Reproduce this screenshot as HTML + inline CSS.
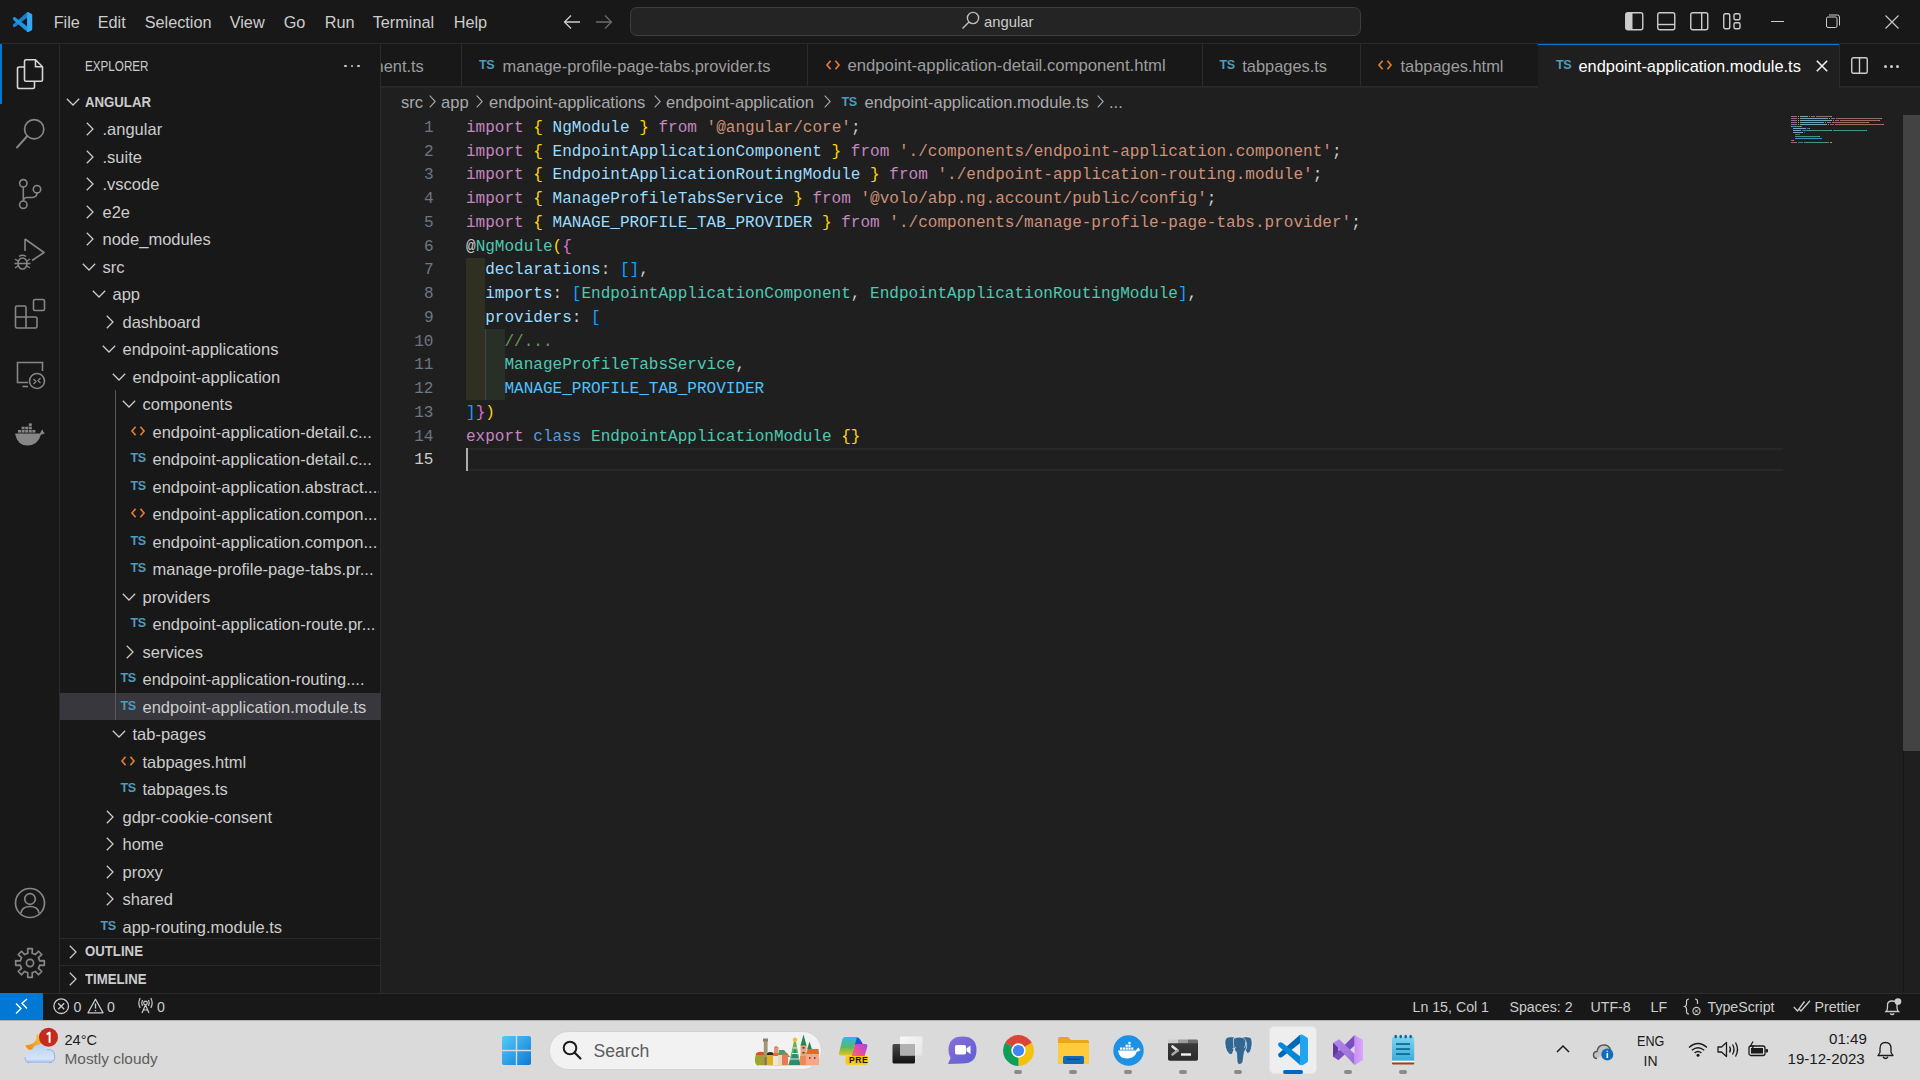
<!DOCTYPE html>
<html><head><meta charset="utf-8"><title>VS Code</title><style>
*{margin:0;padding:0;box-sizing:border-box}
html,body{width:1920px;height:1080px;overflow:hidden;background:#1F1F1F;font-family:"Liberation Sans", sans-serif}
.a{position:absolute}
.t{position:absolute;white-space:pre;line-height:20px;font-family:"Liberation Sans", sans-serif}
svg{position:absolute;overflow:visible}
.code{position:absolute;white-space:pre;font-family:"Liberation Mono", monospace;font-size:16.04px;line-height:23.75px;color:#CCCCCC}
</style></head>
<body>
<div class="a" style="left:0;top:0;width:1920px;height:43px;background:#181818"></div>
<div class="a" style="left:0;top:43px;width:1920px;height:1px;background:#2B2B2B"></div>
<svg style="left:11.7px;top:11.7px" width="20.5" height="20.2" viewBox="3.3 2.5 30.7 31">
<path d="M26 2.8 L26 11.3 L8.2 25 Q6 26.3 4.6 24.6 Q3.3 22.8 5 21.2 Z" fill="#1A80C8"/>
<path d="M26 33 L26 24.3 L8.2 10.8 Q6 9.5 4.6 11.2 Q3.3 13 5 14.6 Z" fill="#2094E2"/>
<path d="M26 2.8 Q27.5 2.3 29 3.1 L33 5.4 Q34 6.2 34 7.5 V28.5 Q34 29.8 33 30.6 L29 32.9 Q27.5 33.7 26 33 Z" fill="#33A8F4"/>
</svg>
<div class="t " style="left:53.7px;top:12.17px;font-size:16.25px;color:#CCCCCC;font-weight:400;">File</div>
<div class="t " style="left:97.7px;top:12.17px;font-size:16.25px;color:#CCCCCC;font-weight:400;">Edit</div>
<div class="t " style="left:144.7px;top:12.17px;font-size:16.25px;color:#CCCCCC;font-weight:400;">Selection</div>
<div class="t " style="left:229.7px;top:12.17px;font-size:16.25px;color:#CCCCCC;font-weight:400;">View</div>
<div class="t " style="left:283.7px;top:12.17px;font-size:16.25px;color:#CCCCCC;font-weight:400;">Go</div>
<div class="t " style="left:324.7px;top:12.17px;font-size:16.25px;color:#CCCCCC;font-weight:400;">Run</div>
<div class="t " style="left:372.7px;top:12.17px;font-size:16.25px;color:#CCCCCC;font-weight:400;">Terminal</div>
<div class="t " style="left:453.7px;top:12.17px;font-size:16.25px;color:#CCCCCC;font-weight:400;">Help</div>
<svg style="left:563px;top:14.2px" width="18" height="16" viewBox="0 0 18 16"><path d="M8 1.5 L1.5 8 L8 14.5 M1.5 8 H17" stroke="#CCCCCC" stroke-width="1.3" fill="none"/></svg>
<svg style="left:595px;top:14.2px" width="18" height="16" viewBox="0 0 18 16"><path d="M10 1.5 L16.5 8 L10 14.5 M16.5 8 H1" stroke="#6B6B6B" stroke-width="1.3" fill="none"/></svg>
<div class="a" style="left:630px;top:7px;width:731px;height:29px;background:#242424;border:1px solid #3E3E3E;border-radius:7px"></div>
<svg style="left:961px;top:11px" width="19" height="19" viewBox="0 0 19 19"><circle cx="12" cy="7" r="5.6" stroke="#BDBDBD" stroke-width="1.4" fill="none"/><path d="M8 11 L1.5 17.5" stroke="#BDBDBD" stroke-width="1.5"/></svg>
<div class="t " style="left:984px;top:11.77px;font-size:14.8px;color:#CCCCCC;font-weight:400;">angular</div>
<svg style="left:1625px;top:12px" width="19" height="19" viewBox="0 0 19 19"><rect x="0.75" y="0.75" width="17" height="17" rx="2" stroke="#CCCCCC" stroke-width="1.4" fill="none"/><rect x="1" y="1" width="6.5" height="16.5" fill="#CCCCCC"/></svg>
<svg style="left:1657px;top:12px" width="19" height="19" viewBox="0 0 19 19"><rect x="0.75" y="0.75" width="17" height="17" rx="2" stroke="#CCCCCC" stroke-width="1.4" fill="none"/><path d="M1 12.5 H18" stroke="#CCCCCC" stroke-width="1.4"/></svg>
<svg style="left:1690px;top:12px" width="19" height="19" viewBox="0 0 19 19"><rect x="0.75" y="0.75" width="17" height="17" rx="2" stroke="#CCCCCC" stroke-width="1.4" fill="none"/><path d="M11.7 1 V18" stroke="#CCCCCC" stroke-width="1.4"/></svg>
<svg style="left:1723px;top:13px" width="18" height="17" viewBox="0 0 18 17"><rect x="0.75" y="0.75" width="6" height="15" rx="1.5" stroke="#CCCCCC" stroke-width="1.4" fill="none"/><rect x="11" y="0.75" width="6" height="6" rx="1.5" stroke="#CCCCCC" stroke-width="1.4" fill="none"/><rect x="11" y="9.75" width="6" height="6" rx="1.5" stroke="#CCCCCC" stroke-width="1.4" fill="none"/></svg>
<div class="a" style="left:1771px;top:21px;width:13px;height:1px;background:#CCCCCC"></div>
<svg style="left:1826px;top:14px" width="15" height="15" viewBox="0 0 15 15"><rect x="0.5" y="3" width="10.5" height="10.5" rx="1.5" stroke="#CCCCCC" stroke-width="1" fill="none"/><path d="M3 1 H11.5 Q13.5 1 13.5 3 V11.5" stroke="#CCCCCC" stroke-width="1" fill="none"/></svg>
<svg style="left:1885px;top:15px" width="14" height="14" viewBox="0 0 14 14"><path d="M0.5 0.5 L13.5 13.5 M13.5 0.5 L0.5 13.5" stroke="#CCCCCC" stroke-width="1.1"/></svg>
<div class="a" style="left:0;top:44px;width:59px;height:949px;background:#181818"></div>
<div class="a" style="left:59px;top:44px;width:1px;height:949px;background:#2B2B2B"></div>
<div class="a" style="left:0;top:44px;width:2px;height:60px;background:#0078D4"></div>
<svg style="left:16px;top:58px" width="28" height="32" viewBox="0 0 28 32">
<path d="M8.5 9 H3.5 Q1.5 9 1.5 10.5 V29 Q1.5 30.5 3.5 30.5 H17 Q18.5 30.5 18.5 29 V23.5" stroke="#D7D7D7" stroke-width="1.6" fill="none"/>
<path d="M10 1.8 H19.5 L26.5 8.8 V22 Q26.5 23.3 25 23.3 H10 Q8.5 23.3 8.5 22 V3.3 Q8.5 1.8 10 1.8 Z M19.5 1.8 V8.8 H26.5" stroke="#D7D7D7" stroke-width="1.6" fill="none" stroke-linejoin="round"/>
</svg>
<svg style="left:15px;top:117px" width="32" height="33" viewBox="0 0 32 33">
<circle cx="19.2" cy="12.2" r="9.6" stroke="#868686" stroke-width="1.7" fill="none"/>
<path d="M12.3 19 L2 30.5" stroke="#868686" stroke-width="1.9" stroke-linecap="round"/>
</svg>
<svg style="left:17px;top:177px" width="26" height="34" viewBox="0 0 26 34">
<circle cx="6.3" cy="6.3" r="3.7" stroke="#868686" stroke-width="1.6" fill="none"/>
<circle cx="20" cy="12.2" r="3.7" stroke="#868686" stroke-width="1.6" fill="none"/>
<circle cx="6.3" cy="27.7" r="3.7" stroke="#868686" stroke-width="1.6" fill="none"/>
<path d="M6.3 10 V24 M20 15.9 Q20 20 15 20.5 H10 Q6.3 21 6.3 24" stroke="#868686" stroke-width="1.6" fill="none"/>
</svg>
<svg style="left:14px;top:237px" width="32" height="34" viewBox="0 0 32 34">
<path d="M11 2 V14 M11 2 L30 15.5 L18 23.5" stroke="#868686" stroke-width="1.6" fill="none" stroke-linejoin="round"/>
<ellipse cx="8.5" cy="26.5" rx="4.5" ry="5.5" stroke="#868686" stroke-width="1.6" fill="none"/>
<path d="M5 19.5 Q8.5 17 12 19.5 M1 22 L4 24 M16 22 L13 24 M1 31 L4 29 M16 31 L13 29 M0.5 26.5 H4 M13 26.5 H16.5 M4 26.5 H13" stroke="#868686" stroke-width="1.4" fill="none"/>
</svg>
<svg style="left:14px;top:298px" width="32" height="32" viewBox="0 0 32 32">
<path d="M3 8 H10.5 Q12 8 12 9.5 V19 H21.5 Q23 19 23 20.5 V28.5 Q23 30 21.5 30 H3 Q1.5 30 1.5 28.5 V9.5 Q1.5 8 3 8 Z M1.5 19 H12 V30" stroke="#868686" stroke-width="1.6" fill="none"/>
<rect x="19.5" y="1.5" width="11" height="11" rx="1.5" stroke="#868686" stroke-width="1.6" fill="none"/>
</svg>
<svg style="left:15px;top:360px" width="32" height="30" viewBox="0 0 32 30">
<path d="M13 22.5 H2.5 V2.5 H27.5 V11" stroke="#868686" stroke-width="1.6" fill="none"/>
<path d="M7.5 26.5 H13" stroke="#868686" stroke-width="1.6"/>
<circle cx="22" cy="21" r="7.5" stroke="#868686" stroke-width="1.6" fill="none"/>
<path d="M18.5 19 L21 21.5 L18.5 24 M25.5 18 L23 20.5 L25.5 23" stroke="#868686" stroke-width="1.3" fill="none"/>
</svg>
<svg style="left:14px;top:421px" width="32" height="26" viewBox="0 0 32 26">
<path d="M1 12.5 H26 Q27 9 29 8.5 Q28.5 11 31 12 Q29 13.5 27 13.5 Q24 24 14 24.5 Q3.5 25 1 12.5 Z" fill="#868686"/>
<g fill="#868686"><rect x="4" y="9" width="3" height="2.6"/><rect x="7.6" y="9" width="3" height="2.6"/><rect x="11.2" y="9" width="3" height="2.6"/><rect x="14.8" y="9" width="3" height="2.6"/><rect x="18.4" y="9" width="3" height="2.6"/>
<rect x="7.6" y="5.7" width="3" height="2.6"/><rect x="11.2" y="5.7" width="3" height="2.6"/><rect x="14.8" y="5.7" width="3" height="2.6"/><rect x="14.8" y="2.4" width="3" height="2.6"/></g>
</svg>
<svg style="left:14px;top:887px" width="32" height="32" viewBox="0 0 32 32">
<circle cx="16" cy="16" r="14.5" stroke="#868686" stroke-width="1.7" fill="none"/>
<circle cx="16" cy="12" r="5.3" stroke="#868686" stroke-width="1.7" fill="none"/>
<path d="M7 26 Q8 19.5 16 19.5 Q24 19.5 25 26" stroke="#868686" stroke-width="1.7" fill="none"/>
</svg>
<svg style="left:14px;top:947px" width="32" height="32" viewBox="0 0 32 32">
<polygon points="25.76,13.82 30.31,13.69 30.31,18.31 25.76,18.18 24.44,21.36 27.76,24.49 24.49,27.76 21.36,24.44 18.18,25.76 18.31,30.31 13.69,30.31 13.82,25.76 10.64,24.44 7.51,27.76 4.24,24.49 7.56,21.36 6.24,18.18 1.69,18.31 1.69,13.69 6.24,13.82 7.56,10.64 4.24,7.51 7.51,4.24 10.64,7.56 13.82,6.24 13.69,1.69 18.31,1.69 18.18,6.24 21.36,7.56 24.49,4.24 27.76,7.51 24.44,10.64" stroke="#868686" stroke-width="1.7" fill="none" stroke-linejoin="round"/>
<circle cx="16" cy="16" r="3.6" stroke="#868686" stroke-width="1.7" fill="none"/>
</svg>
<div class="a" style="left:60px;top:44px;width:320px;height:949px;background:#181818"></div>
<div class="a" style="left:380px;top:44px;width:1px;height:949px;background:#2B2B2B"></div>
<div class="t " style="left:85px;top:56.38px;font-size:13.9px;color:#CCCCCC;font-weight:400;transform:scaleX(0.84);transform-origin:0 0;">EXPLORER</div>
<div class="a" style="left:344px;top:64.5px;width:2.6px;height:2.6px;border-radius:50%;background:#CCCCCC"></div>
<div class="a" style="left:350.5px;top:64.5px;width:2.6px;height:2.6px;border-radius:50%;background:#CCCCCC"></div>
<div class="a" style="left:357px;top:64.5px;width:2.6px;height:2.6px;border-radius:50%;background:#CCCCCC"></div>
<svg style="left:65.5px;top:97.5px" width="14" height="8" viewBox="0 0 14 8"><path d="M0.8 0.8 L7 7 L13.2 0.8" stroke="#CCCCCC" stroke-width="1.25" fill="none"/></svg>
<div class="t " style="left:85px;top:92.54px;font-size:13.75px;color:#CCCCCC;font-weight:700;transform:scaleX(0.96);transform-origin:0 0;">ANGULAR</div>
<div class="a" style="left:60px;top:692.75px;width:321px;height:27.5px;background:#37373D"></div>
<div class="a" style="left:60px;top:115.25px;width:319px;height:823px;overflow:hidden"><div class="a" style="left:-60px;top:-115.25px;width:400px;height:1000px"><div class="a" style="left:115px;top:390.25px;width:1px;height:330.0px;background:#585858"></div>
<svg style="left:85.5px;top:122.0px" width="8" height="14" viewBox="0 0 8 14"><path d="M0.8 0.8 L7 7 L0.8 13.2" stroke="#CCCCCC" stroke-width="1.25" fill="none"/></svg>
<div class="t " style="left:102.5px;top:119.08px;font-size:16.5px;color:#CCCCCC;font-weight:400;">.angular</div>
<svg style="left:85.5px;top:149.5px" width="8" height="14" viewBox="0 0 8 14"><path d="M0.8 0.8 L7 7 L0.8 13.2" stroke="#CCCCCC" stroke-width="1.25" fill="none"/></svg>
<div class="t " style="left:102.5px;top:146.58px;font-size:16.5px;color:#CCCCCC;font-weight:400;">.suite</div>
<svg style="left:85.5px;top:177.0px" width="8" height="14" viewBox="0 0 8 14"><path d="M0.8 0.8 L7 7 L0.8 13.2" stroke="#CCCCCC" stroke-width="1.25" fill="none"/></svg>
<div class="t " style="left:102.5px;top:174.08px;font-size:16.5px;color:#CCCCCC;font-weight:400;">.vscode</div>
<svg style="left:85.5px;top:204.5px" width="8" height="14" viewBox="0 0 8 14"><path d="M0.8 0.8 L7 7 L0.8 13.2" stroke="#CCCCCC" stroke-width="1.25" fill="none"/></svg>
<div class="t " style="left:102.5px;top:201.58px;font-size:16.5px;color:#CCCCCC;font-weight:400;">e2e</div>
<svg style="left:85.5px;top:232.0px" width="8" height="14" viewBox="0 0 8 14"><path d="M0.8 0.8 L7 7 L0.8 13.2" stroke="#CCCCCC" stroke-width="1.25" fill="none"/></svg>
<div class="t " style="left:102.5px;top:229.08px;font-size:16.5px;color:#CCCCCC;font-weight:400;">node_modules</div>
<svg style="left:82.2px;top:262.5px" width="14" height="8" viewBox="0 0 14 8"><path d="M0.8 0.8 L7 7 L13.2 0.8" stroke="#CCCCCC" stroke-width="1.25" fill="none"/></svg>
<div class="t " style="left:102.5px;top:256.58px;font-size:16.5px;color:#CCCCCC;font-weight:400;">src</div>
<svg style="left:92.2px;top:290.0px" width="14" height="8" viewBox="0 0 14 8"><path d="M0.8 0.8 L7 7 L13.2 0.8" stroke="#CCCCCC" stroke-width="1.25" fill="none"/></svg>
<div class="t " style="left:112.5px;top:284.08px;font-size:16.5px;color:#CCCCCC;font-weight:400;">app</div>
<svg style="left:105.5px;top:314.5px" width="8" height="14" viewBox="0 0 8 14"><path d="M0.8 0.8 L7 7 L0.8 13.2" stroke="#CCCCCC" stroke-width="1.25" fill="none"/></svg>
<div class="t " style="left:122.5px;top:311.58px;font-size:16.5px;color:#CCCCCC;font-weight:400;">dashboard</div>
<svg style="left:102.2px;top:345.0px" width="14" height="8" viewBox="0 0 14 8"><path d="M0.8 0.8 L7 7 L13.2 0.8" stroke="#CCCCCC" stroke-width="1.25" fill="none"/></svg>
<div class="t " style="left:122.5px;top:339.08px;font-size:16.5px;color:#CCCCCC;font-weight:400;">endpoint-applications</div>
<svg style="left:112.2px;top:372.5px" width="14" height="8" viewBox="0 0 14 8"><path d="M0.8 0.8 L7 7 L13.2 0.8" stroke="#CCCCCC" stroke-width="1.25" fill="none"/></svg>
<div class="t " style="left:132.5px;top:366.58px;font-size:16.5px;color:#CCCCCC;font-weight:400;">endpoint-application</div>
<svg style="left:122.19999999999999px;top:400.0px" width="14" height="8" viewBox="0 0 14 8"><path d="M0.8 0.8 L7 7 L13.2 0.8" stroke="#CCCCCC" stroke-width="1.25" fill="none"/></svg>
<div class="t " style="left:142.5px;top:394.08px;font-size:16.5px;color:#CCCCCC;font-weight:400;">components</div>
<svg style="left:130.8px;top:425.8px" width="14" height="10" viewBox="0 0 14 10"><path d="M4.6 0.8 L1 5 L4.6 9.2 M9.4 0.8 L13 5 L9.4 9.2" stroke="#E37933" stroke-width="1.7" fill="none"/></svg>
<div class="t " style="left:152.5px;top:421.58px;font-size:16.5px;color:#CCCCCC;font-weight:400;">endpoint-application-detail.c...</div>
<div class="t " style="left:130.5px;top:448.23px;font-size:12.6px;color:#519ABA;font-weight:700;letter-spacing:-0.4px;">TS</div>
<div class="t " style="left:152.5px;top:449.08px;font-size:16.5px;color:#CCCCCC;font-weight:400;">endpoint-application-detail.c...</div>
<div class="t " style="left:130.5px;top:475.73px;font-size:12.6px;color:#519ABA;font-weight:700;letter-spacing:-0.4px;">TS</div>
<div class="t " style="left:152.5px;top:476.58px;font-size:16.5px;color:#CCCCCC;font-weight:400;">endpoint-application.abstract....</div>
<svg style="left:130.8px;top:508.3px" width="14" height="10" viewBox="0 0 14 10"><path d="M4.6 0.8 L1 5 L4.6 9.2 M9.4 0.8 L13 5 L9.4 9.2" stroke="#E37933" stroke-width="1.7" fill="none"/></svg>
<div class="t " style="left:152.5px;top:504.08px;font-size:16.5px;color:#CCCCCC;font-weight:400;">endpoint-application.compon...</div>
<div class="t " style="left:130.5px;top:530.73px;font-size:12.6px;color:#519ABA;font-weight:700;letter-spacing:-0.4px;">TS</div>
<div class="t " style="left:152.5px;top:531.58px;font-size:16.5px;color:#CCCCCC;font-weight:400;">endpoint-application.compon...</div>
<div class="t " style="left:130.5px;top:558.23px;font-size:12.6px;color:#519ABA;font-weight:700;letter-spacing:-0.4px;">TS</div>
<div class="t " style="left:152.5px;top:559.08px;font-size:16.5px;color:#CCCCCC;font-weight:400;">manage-profile-page-tabs.pr...</div>
<svg style="left:122.19999999999999px;top:592.5px" width="14" height="8" viewBox="0 0 14 8"><path d="M0.8 0.8 L7 7 L13.2 0.8" stroke="#CCCCCC" stroke-width="1.25" fill="none"/></svg>
<div class="t " style="left:142.5px;top:586.58px;font-size:16.5px;color:#CCCCCC;font-weight:400;">providers</div>
<div class="t " style="left:130.5px;top:613.23px;font-size:12.6px;color:#519ABA;font-weight:700;letter-spacing:-0.4px;">TS</div>
<div class="t " style="left:152.5px;top:614.08px;font-size:16.5px;color:#CCCCCC;font-weight:400;">endpoint-application-route.pr...</div>
<svg style="left:125.5px;top:644.5px" width="8" height="14" viewBox="0 0 8 14"><path d="M0.8 0.8 L7 7 L0.8 13.2" stroke="#CCCCCC" stroke-width="1.25" fill="none"/></svg>
<div class="t " style="left:142.5px;top:641.58px;font-size:16.5px;color:#CCCCCC;font-weight:400;">services</div>
<div class="t " style="left:120.5px;top:668.23px;font-size:12.6px;color:#519ABA;font-weight:700;letter-spacing:-0.4px;">TS</div>
<div class="t " style="left:142.5px;top:669.08px;font-size:16.5px;color:#CCCCCC;font-weight:400;">endpoint-application-routing....</div>
<div class="t " style="left:120.5px;top:695.73px;font-size:12.6px;color:#519ABA;font-weight:700;letter-spacing:-0.4px;">TS</div>
<div class="t " style="left:142.5px;top:696.58px;font-size:16.5px;color:#CCCCCC;font-weight:400;">endpoint-application.module.ts</div>
<svg style="left:112.2px;top:730.0px" width="14" height="8" viewBox="0 0 14 8"><path d="M0.8 0.8 L7 7 L13.2 0.8" stroke="#CCCCCC" stroke-width="1.25" fill="none"/></svg>
<div class="t " style="left:132.5px;top:724.08px;font-size:16.5px;color:#CCCCCC;font-weight:400;">tab-pages</div>
<svg style="left:120.8px;top:755.8px" width="14" height="10" viewBox="0 0 14 10"><path d="M4.6 0.8 L1 5 L4.6 9.2 M9.4 0.8 L13 5 L9.4 9.2" stroke="#E37933" stroke-width="1.7" fill="none"/></svg>
<div class="t " style="left:142.5px;top:751.58px;font-size:16.5px;color:#CCCCCC;font-weight:400;">tabpages.html</div>
<div class="t " style="left:120.5px;top:778.23px;font-size:12.6px;color:#519ABA;font-weight:700;letter-spacing:-0.4px;">TS</div>
<div class="t " style="left:142.5px;top:779.08px;font-size:16.5px;color:#CCCCCC;font-weight:400;">tabpages.ts</div>
<svg style="left:105.5px;top:809.5px" width="8" height="14" viewBox="0 0 8 14"><path d="M0.8 0.8 L7 7 L0.8 13.2" stroke="#CCCCCC" stroke-width="1.25" fill="none"/></svg>
<div class="t " style="left:122.5px;top:806.58px;font-size:16.5px;color:#CCCCCC;font-weight:400;">gdpr-cookie-consent</div>
<svg style="left:105.5px;top:837.0px" width="8" height="14" viewBox="0 0 8 14"><path d="M0.8 0.8 L7 7 L0.8 13.2" stroke="#CCCCCC" stroke-width="1.25" fill="none"/></svg>
<div class="t " style="left:122.5px;top:834.08px;font-size:16.5px;color:#CCCCCC;font-weight:400;">home</div>
<svg style="left:105.5px;top:864.5px" width="8" height="14" viewBox="0 0 8 14"><path d="M0.8 0.8 L7 7 L0.8 13.2" stroke="#CCCCCC" stroke-width="1.25" fill="none"/></svg>
<div class="t " style="left:122.5px;top:861.58px;font-size:16.5px;color:#CCCCCC;font-weight:400;">proxy</div>
<svg style="left:105.5px;top:892.0px" width="8" height="14" viewBox="0 0 8 14"><path d="M0.8 0.8 L7 7 L0.8 13.2" stroke="#CCCCCC" stroke-width="1.25" fill="none"/></svg>
<div class="t " style="left:122.5px;top:889.08px;font-size:16.5px;color:#CCCCCC;font-weight:400;">shared</div>
<div class="t " style="left:100.5px;top:915.73px;font-size:12.6px;color:#519ABA;font-weight:700;letter-spacing:-0.4px;">TS</div>
<div class="t " style="left:122.5px;top:916.58px;font-size:16.5px;color:#CCCCCC;font-weight:400;">app-routing.module.ts</div></div></div>
<div class="a" style="left:60px;top:938px;width:320px;height:1px;background:#2B2B2B"></div>
<svg style="left:69px;top:944.5px" width="8" height="14" viewBox="0 0 8 14"><path d="M0.8 0.8 L7 7 L0.8 13.2" stroke="#CCCCCC" stroke-width="1.25" fill="none"/></svg>
<div class="t " style="left:85px;top:942.14px;font-size:13.75px;color:#CCCCCC;font-weight:700;transform:scaleX(0.96);transform-origin:0 0;">OUTLINE</div>
<div class="a" style="left:60px;top:965px;width:320px;height:1px;background:#2B2B2B"></div>
<svg style="left:69px;top:972px" width="8" height="14" viewBox="0 0 8 14"><path d="M0.8 0.8 L7 7 L0.8 13.2" stroke="#CCCCCC" stroke-width="1.25" fill="none"/></svg>
<div class="t " style="left:85px;top:969.84px;font-size:13.75px;color:#CCCCCC;font-weight:700;transform:scaleX(0.96);transform-origin:0 0;">TIMELINE</div>
<div class="a" style="left:381px;top:44px;width:1539px;height:43px;background:#181818"></div>
<div class="a" style="left:381px;top:86px;width:1539px;height:1px;background:#2B2B2B"></div>
<div class="a" style="left:381px;top:87px;width:1539px;height:1px;background:#262626"></div>
<div class="a" style="left:461px;top:44px;width:1px;height:43px;background:#2B2B2B"></div>
<div class="a" style="left:807px;top:44px;width:1px;height:43px;background:#2B2B2B"></div>
<div class="t " style="left:479px;top:55.43px;font-size:12.6px;color:#519ABA;font-weight:700;letter-spacing:-0.4px;">TS</div>
<div class="a" style="left:1202px;top:44px;width:1px;height:43px;background:#2B2B2B"></div>
<svg style="left:825.8px;top:60.3px" width="14" height="10" viewBox="0 0 14 10"><path d="M4.6 0.8 L1 5 L4.6 9.2 M9.4 0.8 L13 5 L9.4 9.2" stroke="#E37933" stroke-width="1.7" fill="none"/></svg>
<div class="a" style="left:1360px;top:44px;width:1px;height:43px;background:#2B2B2B"></div>
<div class="t " style="left:1219.5px;top:55.43px;font-size:12.6px;color:#519ABA;font-weight:700;letter-spacing:-0.4px;">TS</div>
<div class="a" style="left:1538px;top:44px;width:1px;height:43px;background:#2B2B2B"></div>
<svg style="left:1378.3px;top:60.3px" width="14" height="10" viewBox="0 0 14 10"><path d="M4.6 0.8 L1 5 L4.6 9.2 M9.4 0.8 L13 5 L9.4 9.2" stroke="#E37933" stroke-width="1.7" fill="none"/></svg>
<div class="a" style="left:381px;top:44px;width:80px;height:43px;overflow:hidden"><div class="t " style="left:-15.5px;top:12.02px;font-size:16.4px;color:#9D9D9D;font-weight:400;">onent.ts</div></div>
<div class="t " style="left:502.5px;top:56.02px;font-size:16.4px;color:#9D9D9D;font-weight:400;">manage-profile-page-tabs.provider.ts</div>
<div class="t " style="left:847.5px;top:55.91px;font-size:16.7px;color:#9D9D9D;font-weight:400;">endpoint-application-detail.component.html</div>
<div class="t " style="left:1242.3px;top:56.02px;font-size:16.4px;color:#9D9D9D;font-weight:400;">tabpages.ts</div>
<div class="t " style="left:1400.5px;top:56.02px;font-size:16.4px;color:#9D9D9D;font-weight:400;">tabpages.html</div>
<div class="a" style="left:1538px;top:44px;width:301px;height:44px;background:#1F1F1F"></div>
<div class="a" style="left:1538px;top:44px;width:301px;height:1px;background:#0078D4"></div>
<div class="a" style="left:1839px;top:44px;width:1px;height:43px;background:#2B2B2B"></div>
<div class="t " style="left:1556px;top:55.43px;font-size:12.6px;color:#519ABA;font-weight:700;letter-spacing:-0.4px;">TS</div>
<div class="t " style="left:1578.5px;top:56.02px;font-size:16.4px;color:#FFFFFF;font-weight:400;">endpoint-application.module.ts</div>
<svg style="left:1815.5px;top:59.8px" width="12" height="12" viewBox="0 0 12 12"><path d="M0.8 0.8 L11.2 11.2 M11.2 0.8 L0.8 11.2" stroke="#F0F0F0" stroke-width="1.6"/></svg>
<svg style="left:1851px;top:57px" width="17" height="17" viewBox="0 0 17 17"><rect x="0.75" y="0.75" width="15.5" height="15.5" rx="1.5" stroke="#CCCCCC" stroke-width="1.4" fill="none"/><path d="M8.5 1 V16" stroke="#CCCCCC" stroke-width="1.4"/></svg>
<div class="a" style="left:1883.5px;top:64.5px;width:3px;height:3px;border-radius:50%;background:#CCCCCC"></div>
<div class="a" style="left:1889.9px;top:64.5px;width:3px;height:3px;border-radius:50%;background:#CCCCCC"></div>
<div class="a" style="left:1896.3px;top:64.5px;width:3px;height:3px;border-radius:50%;background:#CCCCCC"></div>
<div class="t " style="left:401px;top:92.57px;font-size:16.55px;color:#A9A9A9;font-weight:400;">src</div>
<svg style="left:428.5px;top:95px" width="7" height="13" viewBox="0 0 7 13"><path d="M0.7 0.7 L6.2 6.5 L0.7 12.3" stroke="#A9A9A9" stroke-width="1.1" fill="none"/></svg>
<div class="t " style="left:441px;top:92.57px;font-size:16.55px;color:#A9A9A9;font-weight:400;">app</div>
<svg style="left:476px;top:95px" width="7" height="13" viewBox="0 0 7 13"><path d="M0.7 0.7 L6.2 6.5 L0.7 12.3" stroke="#A9A9A9" stroke-width="1.1" fill="none"/></svg>
<div class="t " style="left:489px;top:92.57px;font-size:16.55px;color:#A9A9A9;font-weight:400;">endpoint-applications</div>
<svg style="left:653.5px;top:95px" width="7" height="13" viewBox="0 0 7 13"><path d="M0.7 0.7 L6.2 6.5 L0.7 12.3" stroke="#A9A9A9" stroke-width="1.1" fill="none"/></svg>
<div class="t " style="left:666px;top:92.57px;font-size:16.55px;color:#A9A9A9;font-weight:400;">endpoint-application</div>
<svg style="left:823.5px;top:95px" width="7" height="13" viewBox="0 0 7 13"><path d="M0.7 0.7 L6.2 6.5 L0.7 12.3" stroke="#A9A9A9" stroke-width="1.1" fill="none"/></svg>
<div class="t " style="left:841.5px;top:91.63px;font-size:12.6px;color:#519ABA;font-weight:700;letter-spacing:-0.4px;">TS</div>
<div class="t " style="left:864.5px;top:92.57px;font-size:16.55px;color:#A9A9A9;font-weight:400;">endpoint-application.module.ts</div>
<svg style="left:1096.5px;top:95px" width="7" height="13" viewBox="0 0 7 13"><path d="M0.7 0.7 L6.2 6.5 L0.7 12.3" stroke="#A9A9A9" stroke-width="1.1" fill="none"/></svg>
<div class="t " style="left:1109px;top:92.57px;font-size:16.55px;color:#A9A9A9;font-weight:400;">...</div>
<div class="a" style="left:466px;top:257.75px;width:19.25px;height:23.75px;background:#2F2F22"></div>
<div class="a" style="left:466px;top:281.50px;width:19.25px;height:23.75px;background:#2F2F22"></div>
<div class="a" style="left:466px;top:305.25px;width:19.25px;height:23.75px;background:#2F2F22"></div>
<div class="a" style="left:466px;top:329.00px;width:19.25px;height:23.75px;background:#2F2F22"></div>
<div class="a" style="left:466px;top:352.75px;width:19.25px;height:23.75px;background:#2F2F22"></div>
<div class="a" style="left:466px;top:376.50px;width:19.25px;height:23.75px;background:#2F2F22"></div>
<div class="a" style="left:485.25px;top:329.00px;width:19.25px;height:23.75px;background:#272F27"></div>
<div class="a" style="left:485.25px;top:352.75px;width:19.25px;height:23.75px;background:#272F27"></div>
<div class="a" style="left:485.25px;top:376.50px;width:19.25px;height:23.75px;background:#272F27"></div>
<div class="a" style="left:485px;top:329.00px;width:1px;height:71.25px;background:#454545"></div>
<div class="a" style="left:466px;top:448px;width:1317px;height:23px;border-top:2px solid #282828;border-bottom:2px solid #282828"></div>
<div class="a" style="left:466px;top:448.25px;width:2px;height:22.75px;background:#AEAFAD"></div>
<div class="code" style="left:384px;top:116.85px;width:49.5px;text-align:right;color:#6E7681">1</div>
<div class="code" style="left:384px;top:140.60px;width:49.5px;text-align:right;color:#6E7681">2</div>
<div class="code" style="left:384px;top:164.35px;width:49.5px;text-align:right;color:#6E7681">3</div>
<div class="code" style="left:384px;top:188.10px;width:49.5px;text-align:right;color:#6E7681">4</div>
<div class="code" style="left:384px;top:211.85px;width:49.5px;text-align:right;color:#6E7681">5</div>
<div class="code" style="left:384px;top:235.60px;width:49.5px;text-align:right;color:#6E7681">6</div>
<div class="code" style="left:384px;top:259.35px;width:49.5px;text-align:right;color:#6E7681">7</div>
<div class="code" style="left:384px;top:283.10px;width:49.5px;text-align:right;color:#6E7681">8</div>
<div class="code" style="left:384px;top:306.85px;width:49.5px;text-align:right;color:#6E7681">9</div>
<div class="code" style="left:384px;top:330.60px;width:49.5px;text-align:right;color:#6E7681">10</div>
<div class="code" style="left:384px;top:354.35px;width:49.5px;text-align:right;color:#6E7681">11</div>
<div class="code" style="left:384px;top:378.10px;width:49.5px;text-align:right;color:#6E7681">12</div>
<div class="code" style="left:384px;top:401.85px;width:49.5px;text-align:right;color:#6E7681">13</div>
<div class="code" style="left:384px;top:425.60px;width:49.5px;text-align:right;color:#6E7681">14</div>
<div class="code" style="left:384px;top:449.35px;width:49.5px;text-align:right;color:#CCCCCC">15</div>
<div class="code" style="left:466px;top:116.85px"><span style="color:#C586C0">import</span><span style="color:#CCCCCC"> </span><span style="color:#FFD700">{</span><span style="color:#CCCCCC"> </span><span style="color:#9CDCFE">NgModule</span><span style="color:#CCCCCC"> </span><span style="color:#FFD700">}</span><span style="color:#CCCCCC"> </span><span style="color:#C586C0">from</span><span style="color:#CCCCCC"> </span><span style="color:#CE9178">'@angular/core'</span><span style="color:#CCCCCC">;</span></div>
<div class="code" style="left:466px;top:140.60px"><span style="color:#C586C0">import</span><span style="color:#CCCCCC"> </span><span style="color:#FFD700">{</span><span style="color:#CCCCCC"> </span><span style="color:#9CDCFE">EndpointApplicationComponent</span><span style="color:#CCCCCC"> </span><span style="color:#FFD700">}</span><span style="color:#CCCCCC"> </span><span style="color:#C586C0">from</span><span style="color:#CCCCCC"> </span><span style="color:#CE9178">'./components/endpoint-application.component'</span><span style="color:#CCCCCC">;</span></div>
<div class="code" style="left:466px;top:164.35px"><span style="color:#C586C0">import</span><span style="color:#CCCCCC"> </span><span style="color:#FFD700">{</span><span style="color:#CCCCCC"> </span><span style="color:#9CDCFE">EndpointApplicationRoutingModule</span><span style="color:#CCCCCC"> </span><span style="color:#FFD700">}</span><span style="color:#CCCCCC"> </span><span style="color:#C586C0">from</span><span style="color:#CCCCCC"> </span><span style="color:#CE9178">'./endpoint-application-routing.module'</span><span style="color:#CCCCCC">;</span></div>
<div class="code" style="left:466px;top:188.10px"><span style="color:#C586C0">import</span><span style="color:#CCCCCC"> </span><span style="color:#FFD700">{</span><span style="color:#CCCCCC"> </span><span style="color:#9CDCFE">ManageProfileTabsService</span><span style="color:#CCCCCC"> </span><span style="color:#FFD700">}</span><span style="color:#CCCCCC"> </span><span style="color:#C586C0">from</span><span style="color:#CCCCCC"> </span><span style="color:#CE9178">'@volo/abp.ng.account/public/config'</span><span style="color:#CCCCCC">;</span></div>
<div class="code" style="left:466px;top:211.85px"><span style="color:#C586C0">import</span><span style="color:#CCCCCC"> </span><span style="color:#FFD700">{</span><span style="color:#CCCCCC"> </span><span style="color:#9CDCFE">MANAGE_PROFILE_TAB_PROVIDER</span><span style="color:#CCCCCC"> </span><span style="color:#FFD700">}</span><span style="color:#CCCCCC"> </span><span style="color:#C586C0">from</span><span style="color:#CCCCCC"> </span><span style="color:#CE9178">'./components/manage-profile-page-tabs.provider'</span><span style="color:#CCCCCC">;</span></div>
<div class="code" style="left:466px;top:235.60px"><span style="color:#CCCCCC">@</span><span style="color:#4EC9B0">NgModule</span><span style="color:#FFD700">(</span><span style="color:#DA70D6">{</span></div>
<div class="code" style="left:466px;top:259.35px"><span style="color:#CCCCCC">  </span><span style="color:#9CDCFE">declarations</span><span style="color:#CCCCCC">:</span><span style="color:#CCCCCC"> </span><span style="color:#179FFF">[</span><span style="color:#179FFF">]</span><span style="color:#CCCCCC">,</span></div>
<div class="code" style="left:466px;top:283.10px"><span style="color:#CCCCCC">  </span><span style="color:#9CDCFE">imports</span><span style="color:#CCCCCC">:</span><span style="color:#CCCCCC"> </span><span style="color:#179FFF">[</span><span style="color:#4EC9B0">EndpointApplicationComponent</span><span style="color:#CCCCCC">,</span><span style="color:#CCCCCC"> </span><span style="color:#4EC9B0">EndpointApplicationRoutingModule</span><span style="color:#179FFF">]</span><span style="color:#CCCCCC">,</span></div>
<div class="code" style="left:466px;top:306.85px"><span style="color:#CCCCCC">  </span><span style="color:#9CDCFE">providers</span><span style="color:#CCCCCC">:</span><span style="color:#CCCCCC"> </span><span style="color:#179FFF">[</span></div>
<div class="code" style="left:466px;top:330.60px"><span style="color:#CCCCCC">    </span><span style="color:#6A9955">//...</span></div>
<div class="code" style="left:466px;top:354.35px"><span style="color:#CCCCCC">    </span><span style="color:#4EC9B0">ManageProfileTabsService</span><span style="color:#CCCCCC">,</span></div>
<div class="code" style="left:466px;top:378.10px"><span style="color:#CCCCCC">    </span><span style="color:#4FC1FF">MANAGE_PROFILE_TAB_PROVIDER</span></div>
<div class="code" style="left:466px;top:401.85px"><span style="color:#179FFF">]</span><span style="color:#DA70D6">}</span><span style="color:#FFD700">)</span></div>
<div class="code" style="left:466px;top:425.60px"><span style="color:#C586C0">export</span><span style="color:#CCCCCC"> </span><span style="color:#569CD6">class</span><span style="color:#CCCCCC"> </span><span style="color:#4EC9B0">EndpointApplicationModule</span><span style="color:#CCCCCC"> </span><span style="color:#FFD700">{}</span></div>
<div class="code" style="left:466px;top:449.35px"></div>
<div class="a" style="left:1791px;top:115.5px;width:6px;height:1px;background:#C586C0;opacity:0.7"></div>
<div class="a" style="left:1798px;top:115.5px;width:1px;height:1px;background:#FFD700;opacity:0.7"></div>
<div class="a" style="left:1800px;top:115.5px;width:8px;height:1px;background:#9CDCFE;opacity:0.7"></div>
<div class="a" style="left:1809px;top:115.5px;width:1px;height:1px;background:#FFD700;opacity:0.7"></div>
<div class="a" style="left:1811px;top:115.5px;width:4px;height:1px;background:#C586C0;opacity:0.7"></div>
<div class="a" style="left:1816px;top:115.5px;width:15px;height:1px;background:#CE9178;opacity:0.7"></div>
<div class="a" style="left:1831px;top:115.5px;width:1px;height:1px;background:#CCCCCC;opacity:0.7"></div>
<div class="a" style="left:1791px;top:117.5px;width:6px;height:1px;background:#C586C0;opacity:0.7"></div>
<div class="a" style="left:1798px;top:117.5px;width:1px;height:1px;background:#FFD700;opacity:0.7"></div>
<div class="a" style="left:1800px;top:117.5px;width:28px;height:1px;background:#9CDCFE;opacity:0.7"></div>
<div class="a" style="left:1829px;top:117.5px;width:1px;height:1px;background:#FFD700;opacity:0.7"></div>
<div class="a" style="left:1831px;top:117.5px;width:4px;height:1px;background:#C586C0;opacity:0.7"></div>
<div class="a" style="left:1836px;top:117.5px;width:45px;height:1px;background:#CE9178;opacity:0.7"></div>
<div class="a" style="left:1881px;top:117.5px;width:1px;height:1px;background:#CCCCCC;opacity:0.7"></div>
<div class="a" style="left:1791px;top:119.5px;width:6px;height:1px;background:#C586C0;opacity:0.7"></div>
<div class="a" style="left:1798px;top:119.5px;width:1px;height:1px;background:#FFD700;opacity:0.7"></div>
<div class="a" style="left:1800px;top:119.5px;width:32px;height:1px;background:#9CDCFE;opacity:0.7"></div>
<div class="a" style="left:1833px;top:119.5px;width:1px;height:1px;background:#FFD700;opacity:0.7"></div>
<div class="a" style="left:1835px;top:119.5px;width:4px;height:1px;background:#C586C0;opacity:0.7"></div>
<div class="a" style="left:1840px;top:119.5px;width:39px;height:1px;background:#CE9178;opacity:0.7"></div>
<div class="a" style="left:1879px;top:119.5px;width:1px;height:1px;background:#CCCCCC;opacity:0.7"></div>
<div class="a" style="left:1791px;top:121.5px;width:6px;height:1px;background:#C586C0;opacity:0.7"></div>
<div class="a" style="left:1798px;top:121.5px;width:1px;height:1px;background:#FFD700;opacity:0.7"></div>
<div class="a" style="left:1800px;top:121.5px;width:24px;height:1px;background:#9CDCFE;opacity:0.7"></div>
<div class="a" style="left:1825px;top:121.5px;width:1px;height:1px;background:#FFD700;opacity:0.7"></div>
<div class="a" style="left:1827px;top:121.5px;width:4px;height:1px;background:#C586C0;opacity:0.7"></div>
<div class="a" style="left:1832px;top:121.5px;width:36px;height:1px;background:#CE9178;opacity:0.7"></div>
<div class="a" style="left:1868px;top:121.5px;width:1px;height:1px;background:#CCCCCC;opacity:0.7"></div>
<div class="a" style="left:1791px;top:123.5px;width:6px;height:1px;background:#C586C0;opacity:0.7"></div>
<div class="a" style="left:1798px;top:123.5px;width:1px;height:1px;background:#FFD700;opacity:0.7"></div>
<div class="a" style="left:1800px;top:123.5px;width:27px;height:1px;background:#9CDCFE;opacity:0.7"></div>
<div class="a" style="left:1828px;top:123.5px;width:1px;height:1px;background:#FFD700;opacity:0.7"></div>
<div class="a" style="left:1830px;top:123.5px;width:4px;height:1px;background:#C586C0;opacity:0.7"></div>
<div class="a" style="left:1835px;top:123.5px;width:48px;height:1px;background:#CE9178;opacity:0.7"></div>
<div class="a" style="left:1883px;top:123.5px;width:1px;height:1px;background:#CCCCCC;opacity:0.7"></div>
<div class="a" style="left:1791px;top:125.5px;width:1px;height:1px;background:#CCCCCC;opacity:0.7"></div>
<div class="a" style="left:1792px;top:125.5px;width:8px;height:1px;background:#4EC9B0;opacity:0.7"></div>
<div class="a" style="left:1800px;top:125.5px;width:1px;height:1px;background:#FFD700;opacity:0.7"></div>
<div class="a" style="left:1801px;top:125.5px;width:1px;height:1px;background:#DA70D6;opacity:0.7"></div>
<div class="a" style="left:1793px;top:127.5px;width:12px;height:1px;background:#9CDCFE;opacity:0.7"></div>
<div class="a" style="left:1805px;top:127.5px;width:1px;height:1px;background:#CCCCCC;opacity:0.7"></div>
<div class="a" style="left:1807px;top:127.5px;width:1px;height:1px;background:#179FFF;opacity:0.7"></div>
<div class="a" style="left:1808px;top:127.5px;width:1px;height:1px;background:#179FFF;opacity:0.7"></div>
<div class="a" style="left:1809px;top:127.5px;width:1px;height:1px;background:#CCCCCC;opacity:0.7"></div>
<div class="a" style="left:1793px;top:129.5px;width:7px;height:1px;background:#9CDCFE;opacity:0.7"></div>
<div class="a" style="left:1800px;top:129.5px;width:1px;height:1px;background:#CCCCCC;opacity:0.7"></div>
<div class="a" style="left:1802px;top:129.5px;width:1px;height:1px;background:#179FFF;opacity:0.7"></div>
<div class="a" style="left:1803px;top:129.5px;width:28px;height:1px;background:#4EC9B0;opacity:0.7"></div>
<div class="a" style="left:1831px;top:129.5px;width:1px;height:1px;background:#CCCCCC;opacity:0.7"></div>
<div class="a" style="left:1833px;top:129.5px;width:32px;height:1px;background:#4EC9B0;opacity:0.7"></div>
<div class="a" style="left:1865px;top:129.5px;width:1px;height:1px;background:#179FFF;opacity:0.7"></div>
<div class="a" style="left:1866px;top:129.5px;width:1px;height:1px;background:#CCCCCC;opacity:0.7"></div>
<div class="a" style="left:1793px;top:131.5px;width:9px;height:1px;background:#9CDCFE;opacity:0.7"></div>
<div class="a" style="left:1802px;top:131.5px;width:1px;height:1px;background:#CCCCCC;opacity:0.7"></div>
<div class="a" style="left:1804px;top:131.5px;width:1px;height:1px;background:#179FFF;opacity:0.7"></div>
<div class="a" style="left:1795px;top:133.5px;width:5px;height:1px;background:#6A9955;opacity:0.7"></div>
<div class="a" style="left:1795px;top:135.5px;width:24px;height:1px;background:#4EC9B0;opacity:0.7"></div>
<div class="a" style="left:1819px;top:135.5px;width:1px;height:1px;background:#CCCCCC;opacity:0.7"></div>
<div class="a" style="left:1795px;top:137.5px;width:27px;height:1px;background:#4FC1FF;opacity:0.7"></div>
<div class="a" style="left:1791px;top:139.5px;width:1px;height:1px;background:#179FFF;opacity:0.7"></div>
<div class="a" style="left:1792px;top:139.5px;width:1px;height:1px;background:#DA70D6;opacity:0.7"></div>
<div class="a" style="left:1793px;top:139.5px;width:1px;height:1px;background:#FFD700;opacity:0.7"></div>
<div class="a" style="left:1791px;top:141.5px;width:6px;height:1px;background:#C586C0;opacity:0.7"></div>
<div class="a" style="left:1798px;top:141.5px;width:5px;height:1px;background:#569CD6;opacity:0.7"></div>
<div class="a" style="left:1804px;top:141.5px;width:25px;height:1px;background:#4EC9B0;opacity:0.7"></div>
<div class="a" style="left:1830px;top:141.5px;width:2px;height:1px;background:#FFD700;opacity:0.7"></div>
<div class="a" style="left:1903px;top:115px;width:17px;height:636px;background:#434343"></div>
<div class="a" style="left:1903px;top:751px;width:1px;height:242px;background:#161616"></div>
<div class="a" style="left:0;top:993px;width:1920px;height:27px;background:#181818"></div>
<div class="a" style="left:0;top:993px;width:1920px;height:1px;background:#2B2B2B"></div>
<div class="a" style="left:0;top:993px;width:43px;height:27px;background:#0078D4"></div>
<svg style="left:15px;top:997.5px" width="14" height="17" viewBox="0 0 14 17"><path d="M1 15.5 L6 10.5 L1 5.5 M12 1 L7 5.3 L12 10.5" stroke="#FFFFFF" stroke-width="1.4" fill="none"/></svg>
<svg style="left:53px;top:998.2px" width="17" height="17" viewBox="0 0 17 17"><circle cx="8.2" cy="8.2" r="7.3" stroke="#CCCCCC" stroke-width="1.3" fill="none"/><path d="M5.2 5.2 L11.2 11.2 M11.2 5.2 L5.2 11.2" stroke="#CCCCCC" stroke-width="1.3"/></svg>
<div class="t " style="left:73.5px;top:996.68px;font-size:14.2px;color:#CCCCCC;font-weight:400;">0</div>
<svg style="left:87px;top:998.2px" width="17" height="16" viewBox="0 0 17 16"><path d="M8.5 1.2 L16 14.8 H1 Z" stroke="#CCCCCC" stroke-width="1.3" fill="none" stroke-linejoin="round"/><path d="M8.5 5.5 V10.5 M8.5 12 V13.3" stroke="#CCCCCC" stroke-width="1.3"/></svg>
<div class="t " style="left:107px;top:996.68px;font-size:14.2px;color:#CCCCCC;font-weight:400;">0</div>
<svg style="left:138px;top:997.3px" width="15" height="17" viewBox="0 0 15 17"><circle cx="7.5" cy="6" r="1.8" stroke="#CCCCCC" stroke-width="1.2" fill="none"/><path d="M4.5 3 Q3 6 4.5 9 M10.5 3 Q12 6 10.5 9 M2.2 1 Q-0.5 6 2.2 11 M12.8 1 Q15.5 6 12.8 11 M7.5 8 L4 16 M7.5 8 L11 16 M5.3 13 H9.7" stroke="#CCCCCC" stroke-width="1.2" fill="none"/></svg>
<div class="t " style="left:157px;top:996.68px;font-size:14.2px;color:#CCCCCC;font-weight:400;">0</div>
<div class="t " style="left:1412.5px;top:996.68px;font-size:14.2px;color:#CCCCCC;font-weight:400;">Ln 15, Col 1</div>
<div class="t " style="left:1509.5px;top:996.68px;font-size:14.2px;color:#CCCCCC;font-weight:400;">Spaces: 2</div>
<div class="t " style="left:1590.5px;top:996.68px;font-size:14.2px;color:#CCCCCC;font-weight:400;">UTF-8</div>
<div class="t " style="left:1650.5px;top:996.68px;font-size:14.2px;color:#CCCCCC;font-weight:400;">LF</div>
<svg style="left:1684px;top:998px" width="18" height="18" viewBox="0 0 18 18"><path d="M5 1 Q2.5 1 2.5 3.5 V6 Q2.5 8 0.8 8.5 Q2.5 9 2.5 11 V13.5 Q2.5 16 5 16 M11 1 Q13.5 1 13.5 3.5 V6" stroke="#CCCCCC" stroke-width="1.2" fill="none"/><circle cx="12.5" cy="13" r="3.6" stroke="#CCCCCC" stroke-width="1.1" fill="none"/><path d="M11 11.5 L14 14.5 M14 11.5 L11 14.5" stroke="#CCCCCC" stroke-width="1"/></svg>
<div class="t " style="left:1707.5px;top:996.68px;font-size:14.2px;color:#CCCCCC;font-weight:400;">TypeScript</div>
<svg style="left:1793px;top:1000px" width="18" height="13" viewBox="0 0 18 13"><path d="M0.8 7 L4.5 11 L11.5 1.5 M6.5 9.5 L8 11 L17 0.8" stroke="#CCCCCC" stroke-width="1.3" fill="none"/></svg>
<div class="t " style="left:1814.5px;top:996.68px;font-size:14.2px;color:#CCCCCC;font-weight:400;">Prettier</div>
<svg style="left:1884px;top:998px" width="18" height="18" viewBox="0 0 18 18"><path d="M2 13.5 H14.5 Q13 12 13 9.5 V7 Q13 3 8.2 3 Q3.5 3 3.5 7 V9.5 Q3.5 12 2 13.5 Z M6.2 15.5 Q8.2 17.5 10.2 15.5" stroke="#CCCCCC" stroke-width="1.3" fill="none"/><circle cx="14" cy="3.6" r="3.3" fill="#CCCCCC"/></svg>
<div class="a" style="left:0;top:1020px;width:1920px;height:60px;background:#DADADA"></div>
<div class="a" style="left:0;top:1020px;width:1920px;height:1px;background:#B0B0B0"></div>
<svg style="left:20px;top:1028px" width="44" height="40" viewBox="0 0 44 40">
<defs><linearGradient id="cl" x1="0" y1="0" x2="0" y2="1"><stop offset="0" stop-color="#B9D1F4"/><stop offset="0.8" stop-color="#D6E4F8"/><stop offset="1" stop-color="#98B8EC"/></linearGradient>
<linearGradient id="mn" x1="1" y1="0" x2="0" y2="1"><stop offset="0" stop-color="#F6C73A"/><stop offset="1" stop-color="#F08410"/></linearGradient></defs>
<path d="M16.3 6.3 C17.5 11 16 16.5 5.2 17.4 C6.5 19.5 8 21 9.6 21.9 C16 21.5 22 17.5 22 12 C22 9 19.5 7 16.3 6.3 Z" fill="url(#mn)"/>
<path d="M9.5 34.8 Q5 34.8 5.2 29 Q5.6 23 11.5 23.3 Q13.5 16.2 20 16.3 Q24.8 16.5 27 21.5 Q34.6 20.8 34.8 28 Q35 34.8 29 34.8 Z" fill="url(#cl)"/>
<path d="M9.5 34.8 Q5 34.8 5.2 29 M29 34.8 Q35 34.8 34.8 28 Q34.6 20.8 27 21.5" stroke="#86A9E6" stroke-width="1" fill="none" opacity="0.8"/>
<circle cx="28.5" cy="9.3" r="9.5" fill="#C42B1C"/>
<path d="M26.7 6.4 L29.6 4.6 V14.8" stroke="#FFFFFF" stroke-width="2" fill="none" stroke-linejoin="round"/>
</svg>
<div class="t " style="left:64.5px;top:1029.64px;font-size:14.6px;color:#1B1B1B;font-weight:400;">24°C</div>
<div class="t " style="left:64.5px;top:1049.16px;font-size:15.4px;color:#5E5E5E;font-weight:400;">Mostly cloudy</div>
<svg style="left:502px;top:1035.5px" width="29" height="29" viewBox="0 0 29 29">
<defs><linearGradient id="wl" x1="0" y1="0" x2="1" y2="1"><stop offset="0" stop-color="#52CCF8"/><stop offset="1" stop-color="#0F78D5"/></linearGradient></defs>
<path d="M0 2 Q0 0 2 0 H13.8 V13.8 H0 Z M15.2 0 H27 Q29 0 29 2 V13.8 H15.2 Z M0 15.2 H13.8 V29 H2 Q0 29 0 27 Z M15.2 15.2 H29 V27 Q29 29 27 29 H15.2 Z" fill="url(#wl)"/>
</svg>
<div class="a" style="left:549px;top:1031px;width:273px;height:38.5px;background:#F2F2F2;border:1px solid #D3D3D3;border-radius:19.25px"></div>
<svg style="left:562px;top:1040px" width="20" height="20" viewBox="0 0 20 20"><circle cx="8" cy="8" r="6.3" stroke="#1C1C1C" stroke-width="2" fill="none"/><path d="M12.5 12.5 L18.5 18.5" stroke="#1C1C1C" stroke-width="2.2" stroke-linecap="round"/></svg>
<div class="t " style="left:593.5px;top:1041.40px;font-size:17.6px;color:#5D5D5D;font-weight:400;">Search</div>
<svg style="left:750px;top:1032px" width="75" height="38" viewBox="0 0 75 38">
<defs><clipPath id="town"><path d="M8 34 Q3 31 6 22 L14 2 H70 Q73 18 69 34 Z"/></clipPath></defs>
<g clip-path="url(#town)">
<rect x="5" y="21" width="10" height="13" fill="#9DA52E"/>
<path d="M5 22 Q9 18.5 15 20.5 V23 H5 Z" fill="#D0562A"/>
<rect x="13.8" y="8" width="3.8" height="26" fill="#A39674"/>
<rect x="13" y="6.5" width="5" height="3" fill="#8E8163"/>
<rect x="14.5" y="25" width="2.2" height="9" fill="#837758"/>
<rect x="17" y="21" width="6.5" height="13" fill="#E2AE22"/>
<path d="M17 21.5 Q19.5 19 23.5 21 V23 H17 Z" fill="#2E2A26"/>
<rect x="24" y="15" width="4.5" height="8" fill="#E59572"/>
<path d="M24 16 L26 13.5 L28.5 16 Z" fill="#E08060"/>
<path d="M29 18 H34 L40 25 H29 Z" fill="#3D9E78"/>
<rect x="23" y="22" width="5" height="12" fill="#EFE6D8"/>
<rect x="23" y="21" width="6" height="3" fill="#D87040"/>
<rect x="28" y="23" width="4.5" height="11" fill="#E8D8BC"/>
<rect x="32" y="22.5" width="6" height="11.5" fill="#E87A55"/>
<path d="M31.5 22.5 L33.5 21 H37 L38.5 23 Z" fill="#D96A3C"/>
<path d="M45 5 L50.5 33 H38.5 Z" fill="#66B14E"/>
<path d="M45 16 L50.5 33 H38.5 Z" fill="#2F8A72"/>
<path d="M40 27 H49 M42 21.5 H48.5 M43 16 H47.5" stroke="#E8ECF2" stroke-width="1.2"/>
<circle cx="45" cy="7.8" r="2.3" fill="#E8C43A"/>
<rect x="50.5" y="13" width="6" height="21" fill="#F0A27F"/>
<path d="M50.5 13.5 L53.5 2.5 L56.5 13.5 Z" fill="#1F8A4C"/>
<rect x="52.5" y="15" width="2" height="1.6" fill="#5A3A2A"/><rect x="52.5" y="20" width="2" height="1.6" fill="#5A3A2A"/>
<path d="M57 17.5 L59.5 9.5 L62 17.5 Z" fill="#1F8A4C"/>
<rect x="57" y="17" width="5" height="6" fill="#F3B090"/>
<rect x="56" y="21" width="13" height="13" fill="#F4A888"/>
<path d="M56 22 L58 17 H68.5 L69 22 Z" fill="#E06A2A"/>
<rect x="59" y="25" width="1.5" height="2" fill="#7A4A3A"/><rect x="64" y="25" width="1.5" height="2" fill="#7A4A3A"/>
<rect x="50" y="24" width="6" height="10" fill="#EE8A55"/>
<rect x="8" y="33" width="62" height="1.5" fill="#DCD6C4"/>
</g>
</svg>
<svg style="left:838px;top:1036px" width="31" height="30" viewBox="0 0 31 30">
<defs><linearGradient id="cpl" x1="0" y1="0" x2="0" y2="1"><stop offset="0" stop-color="#2AB6F6"/><stop offset="0.55" stop-color="#5DB761"/><stop offset="1" stop-color="#EAC515"/></linearGradient>
<linearGradient id="cpr" x1="0" y1="1" x2="1" y2="0"><stop offset="0" stop-color="#F86A5A"/><stop offset="0.45" stop-color="#E94E9B"/><stop offset="1" stop-color="#9E45F2"/></linearGradient></defs>
<path d="M17 1 Q21 1 22.5 4 L25.5 9 H16 Z" fill="#1A55D6"/>
<path d="M7 1 H19 L14 19.5 H3 Q0.5 19.5 1 17 L4.3 3.5 Q5 1 7 1 Z" fill="url(#cpl)"/>
<path d="M18.5 8 H27.5 Q29.8 8 29.3 10.5 L26.3 21 H13.5 L16.5 10 Q17 8 18.5 8 Z" fill="url(#cpr)"/>
<rect x="7.5" y="20" width="22.7" height="8.8" rx="2.2" fill="#FFC905"/>
</svg>
<div class="t" style="left:849px;top:1054.4px;font-size:8.6px;line-height:12px;font-weight:700;color:#111111;letter-spacing:0.5px">PRE</div>
<svg style="left:892px;top:1036px" width="31" height="28" viewBox="0 0 31 28">
<defs><linearGradient id="tv" x1="0" y1="0" x2="0" y2="1"><stop offset="0" stop-color="#4A4A4A"/><stop offset="1" stop-color="#111111"/></linearGradient>
<linearGradient id="tv2" x1="0" y1="0" x2="1" y2="1"><stop offset="0" stop-color="#FAFAFA"/><stop offset="1" stop-color="#E6E6E6"/></linearGradient></defs>
<rect x="0.5" y="8" width="22.5" height="19.5" rx="1.5" fill="url(#tv)"/>
<rect x="8" y="0.5" width="22.5" height="19" rx="1" fill="url(#tv2)" opacity="0.92"/>
<rect x="8" y="8" width="15" height="11.5" fill="#A8A8A8" opacity="0.85"/>
</svg>
<svg style="left:947px;top:1036px" width="31" height="28" viewBox="0 0 31 28">
<defs><linearGradient id="mt" x1="0" y1="0" x2="1" y2="1"><stop offset="0" stop-color="#8C6ED8"/><stop offset="1" stop-color="#5B5FD4"/></linearGradient></defs>
<path d="M15.5 0.5 Q29.5 0.5 29.5 14 Q29.5 27.5 15.5 27.5 L1 28 L3.5 22 Q1.5 18.5 1.5 14 Q1.5 0.5 15.5 0.5 Z" fill="url(#mt)"/>
<rect x="8" y="9" width="11" height="9.5" rx="1.8" fill="#FFFFFF"/>
<path d="M19.5 12.3 L23.5 9.5 V18 L19.5 15.3 Z" fill="#FFFFFF"/>
</svg>
<svg style="left:1002.5px;top:1034.5px" width="31" height="31" viewBox="-15.5 -15.5 31 31">
<path d="M0 0 L-13.4 -7.7 A15.5 15.5 0 0 1 13.4 -7.7 Z" fill="#DB4437"/>
<path d="M0 0 L13.4 -7.7 A15.5 15.5 0 0 1 0 15.5 Z" fill="#F4C20D"/>
<path d="M0 0 L0 15.5 A15.5 15.5 0 0 1 -13.4 -7.7 Z" fill="#0F9D58"/>
<circle r="7.2" fill="#FFFFFF"/><circle r="5.6" fill="#4285F4"/>
</svg>
<svg style="left:1057.5px;top:1036.5px" width="31" height="27" viewBox="0 0 31 27">
<path d="M0 2 Q0 0 2 0 H10 L13 3 H29 Q31 3 31 5 V25 Q31 27 29 27 H2 Q0 27 0 25 Z" fill="#E6A718"/>
<path d="M0 6 H31 V25 Q31 27 29 27 H2 Q0 27 0 25 Z" fill="#FFCB3D"/>
<rect x="5" y="19" width="21" height="8" rx="1.5" fill="#0F6CBD"/>
<rect x="9" y="21.5" width="13" height="1.5" fill="#0B4E8E"/>
</svg>
<svg style="left:1112.5px;top:1034.5px" width="31" height="31" viewBox="0 0 31 31">
<circle cx="15.5" cy="15.5" r="15.2" fill="#1D91E6"/>
<path d="M5 15.5 H23 Q24 13 26 12.5 Q26 14.5 27.5 15 Q26 16.5 24 16.5 Q21.5 23.5 14 23.5 Q6 23.5 5 15.5 Z" fill="#FFFFFF"/>
<g fill="#FFFFFF"><rect x="7" y="12.5" width="2.2" height="2.2"/><rect x="9.8" y="12.5" width="2.2" height="2.2"/><rect x="12.6" y="12.5" width="2.2" height="2.2"/><rect x="15.4" y="12.5" width="2.2" height="2.2"/><rect x="18.2" y="12.5" width="2.2" height="2.2"/><rect x="12.6" y="9.7" width="2.2" height="2.2"/><rect x="15.4" y="9.7" width="2.2" height="2.2"/><rect x="15.4" y="6.9" width="2.2" height="2.2"/></g>
</svg>
<svg style="left:1167.8px;top:1038.8px" width="31" height="22" viewBox="0 0 31 22">
<defs><linearGradient id="tm" x1="0" y1="0" x2="0" y2="1"><stop offset="0" stop-color="#3A3A3A"/><stop offset="1" stop-color="#2A2A2A"/></linearGradient></defs>
<path d="M0 4 H30 V20 Q30 21.7 28.3 21.7 H1.7 Q0 21.7 0 20 Z" fill="url(#tm)"/>
<path d="M1.5 0.5 H10 V4.2 H0 V2 Q0 0.5 1.5 0.5 Z" fill="#CCCCCC"/>
<rect x="10" y="0.5" width="10" height="3.7" fill="#9C9C9C"/>
<path d="M20 0.5 H28.5 Q30 0.5 30 2 V4.2 H20 Z" fill="#6B6B6B"/>
<path d="M4.5 7.5 L9.5 11.5" stroke="#E6E6E6" stroke-width="2.6" stroke-linecap="round"/>
<path d="M9.5 11.5 L4.5 15.5" stroke="#A8A8A8" stroke-width="2.6" stroke-linecap="round"/>
<rect x="13" y="14.3" width="10" height="2.4" fill="#F2F2F2"/>
</svg>
<svg style="left:1223.5px;top:1035.5px" width="29" height="29" viewBox="0 0 29 29">
<g fill="#336791" stroke="#FFFFFF" stroke-width="0.6">
<path d="M1 8 Q0 1 6 0.8 Q10 0.5 11.5 2 L10 13 Q8.5 19.5 6 18.5 Q1.5 15.5 1 8 Z"/>
<path d="M17 1.5 Q22.5 -0.2 26.5 1.5 Q29 4.5 27.5 12 Q26.5 17.5 23.5 17.5 L21 14 Z"/>
<path d="M9.5 2.5 Q14 0.2 19 1.5 Q23.5 5 22.5 12 L20.5 15.5 Q19.5 20 19 25.5 Q18 28.5 15.5 28.5 Q13 28.2 13 25 L12.5 16.5 Q9 13.5 9.5 2.5 Z"/>
</g>
<path d="M8.5 12.5 Q11 13.5 12 11 M20.5 12 Q22 9 21.5 6" stroke="#FFFFFF" stroke-width="0.6" fill="none"/>
</svg>
<div class="a" style="left:1269px;top:1026px;width:48px;height:48px;background:#EEEEEE;border-radius:5px;border:1px solid #E3E3E3"></div>
<svg style="left:1274px;top:1032px" width="38" height="36" viewBox="0 0 38 36">
<path d="M26 2.8 L26 11.3 L8.2 25 Q6 26.3 4.6 24.6 Q3.3 22.8 5 21.2 Z" fill="#006AB8"/>
<path d="M26 33 L26 24.3 L8.2 10.8 Q6 9.5 4.6 11.2 Q3.3 13 5 14.6 Z" fill="#0388D8"/>
<path d="M26 2.8 Q27.5 2.3 29 3.1 L33 5.4 Q34 6.2 34 7.5 V28.5 Q34 29.8 33 30.6 L29 32.9 Q27.5 33.7 26 33 Z" fill="#22A5F0"/>
</svg>
<div class="a" style="left:1283px;top:1070px;width:20px;height:4px;border-radius:2px;background:#0067C0"></div>
<svg style="left:1333px;top:1035px" width="30" height="30" viewBox="0 0 100 100">
<defs><linearGradient id="vsp" x1="0" y1="0" x2="1" y2="0"><stop offset="0" stop-color="#C98EF8"/><stop offset="1" stop-color="#D9A6FF"/></linearGradient>
<linearGradient id="vsl" x1="0" y1="0" x2="1" y2="1"><stop offset="0" stop-color="#B585EC"/><stop offset="1" stop-color="#9A6AD8"/></linearGradient></defs>
<path d="M0 26 L18 36 L18 64 L0 74 Z" fill="#5E3A9F"/>
<path d="M0 72 L72 0 L72 35 L18 84 Z" fill="#7A4CBF"/>
<path d="M1 26 L20.6 14 L72 63 L72 100 Z" fill="url(#vsl)"/>
<path d="M72 0 L100 17 L100 83 L72 100 Z" fill="url(#vsp)"/>
</svg>
<svg style="left:1392px;top:1034px" width="23" height="31" viewBox="0 0 23 31">
<defs><linearGradient id="np" x1="0" y1="0" x2="0" y2="1"><stop offset="0" stop-color="#7DD3F3"/><stop offset="1" stop-color="#38ADDB"/></linearGradient></defs>
<path d="M0 4.5 Q0 2.7 1.8 2.7 H20.4 Q22.2 2.7 22.2 4.5 V26.8 H0 Z" fill="url(#np)"/>
<rect x="0" y="26.8" width="22.2" height="1.7" fill="#FFFFFF"/>
<path d="M0 28.5 H22.2 V29.5 Q22.2 30.6 21 30.6 H1.2 Q0 30.6 0 29.5 Z" fill="#A3400C"/>
<g fill="#0E6688"><ellipse cx="3.7" cy="2.6" rx="1.3" ry="1.8"/><ellipse cx="8.7" cy="2.6" rx="1.3" ry="1.8"/><ellipse cx="13.7" cy="2.6" rx="1.3" ry="1.8"/><ellipse cx="18.7" cy="2.6" rx="1.3" ry="1.8"/>
<rect x="4" y="9.2" width="14" height="1.7"/><rect x="4" y="14.2" width="14" height="1.7"/><rect x="4" y="19.2" width="14" height="1.7"/></g>
</svg>
<div class="a" style="left:1013.8px;top:1070px;width:8px;height:3.5px;border-radius:2px;background:#8A8A8A"></div>
<div class="a" style="left:1069px;top:1070px;width:8px;height:3.5px;border-radius:2px;background:#8A8A8A"></div>
<div class="a" style="left:1124px;top:1070px;width:8px;height:3.5px;border-radius:2px;background:#8A8A8A"></div>
<div class="a" style="left:1178.8px;top:1070px;width:8px;height:3.5px;border-radius:2px;background:#8A8A8A"></div>
<div class="a" style="left:1234px;top:1070px;width:8px;height:3.5px;border-radius:2px;background:#8A8A8A"></div>
<div class="a" style="left:1344px;top:1070px;width:8px;height:3.5px;border-radius:2px;background:#8A8A8A"></div>
<div class="a" style="left:1399px;top:1070px;width:8px;height:3.5px;border-radius:2px;background:#8A8A8A"></div>
<svg style="left:1556px;top:1045px" width="14" height="8" viewBox="0 0 14 8"><path d="M1 7 L7 1 L13 7" stroke="#1B1B1B" stroke-width="1.5" fill="none"/></svg>
<svg style="left:1593px;top:1042px" width="22" height="20" viewBox="0 0 22 20">
<path d="M4 16.5 Q0.5 16.5 0.5 13 Q0.5 9.5 4 9.5 Q5 3 11 3 Q16 3 17.5 8" stroke="#555555" stroke-width="1.5" fill="#C4C4C4"/>
<circle cx="14.3" cy="12.6" r="6" fill="#0F6CBD"/>
<path d="M14.3 11 V16 M14.3 8.8 V9.8" stroke="#FFFFFF" stroke-width="1.6"/>
</svg>
<div class="t " style="left:1636.5px;top:1030.85px;font-size:14px;color:#1B1B1B;font-weight:400;transform:scaleX(0.9);transform-origin:0 0;">ENG</div>
<div class="t " style="left:1643.5px;top:1050.65px;font-size:14px;color:#1B1B1B;font-weight:400;">IN</div>
<svg style="left:1688px;top:1042px" width="20" height="15" viewBox="0 0 20 15">
<path d="M1 5.5 Q10 -2.5 19 5.5 M3.8 8.3 Q10 3 16.2 8.3 M6.6 11 Q10 8 13.4 11" stroke="#1B1B1B" stroke-width="1.4" fill="none"/>
<circle cx="10" cy="13.3" r="1.5" fill="#1B1B1B"/>
</svg>
<svg style="left:1717px;top:1041px" width="22" height="17" viewBox="0 0 22 17">
<path d="M1 6 H4.5 L9.5 1.5 V15.5 L4.5 11 H1 Z" stroke="#1B1B1B" stroke-width="1.3" fill="none" stroke-linejoin="round"/>
<path d="M12.5 5.5 Q14.5 8.5 12.5 11.5 M15.5 3.5 Q18.5 8.5 15.5 13.5 M18.5 1.5 Q22.5 8.5 18.5 15.5" stroke="#1B1B1B" stroke-width="1.3" fill="none"/>
</svg>
<svg style="left:1747.5px;top:1040.5px" width="21" height="16" viewBox="0 0 21 16">
<rect x="1" y="5" width="16" height="9.5" rx="2" stroke="#1B1B1B" stroke-width="1.3" fill="none"/>
<rect x="3" y="7" width="12" height="5.5" fill="#1B1B1B"/>
<rect x="17.5" y="8" width="2.5" height="3.5" rx="1" fill="#1B1B1B"/>
<path d="M5 0.5 L2.5 5 H5.5 L3.5 9" stroke="#1B1B1B" stroke-width="1.2" fill="none"/>
</svg>
<div class="t " style="left:1829px;top:1029.47px;font-size:15.1px;color:#1B1B1B;font-weight:400;">01:49</div>
<div class="t " style="left:1787.5px;top:1049.27px;font-size:15.1px;color:#1B1B1B;font-weight:400;">19-12-2023</div>
<svg style="left:1877px;top:1040.5px" width="17" height="19" viewBox="0 0 17 19">
<path d="M1 14.5 H16 L14 11.5 V7.5 Q14 1.5 8.5 1.5 Q3 1.5 3 7.5 V11.5 Z M6 16 Q8.5 19 11 16" stroke="#1B1B1B" stroke-width="1.3" fill="none" stroke-linejoin="round"/>
</svg>
</body></html>
